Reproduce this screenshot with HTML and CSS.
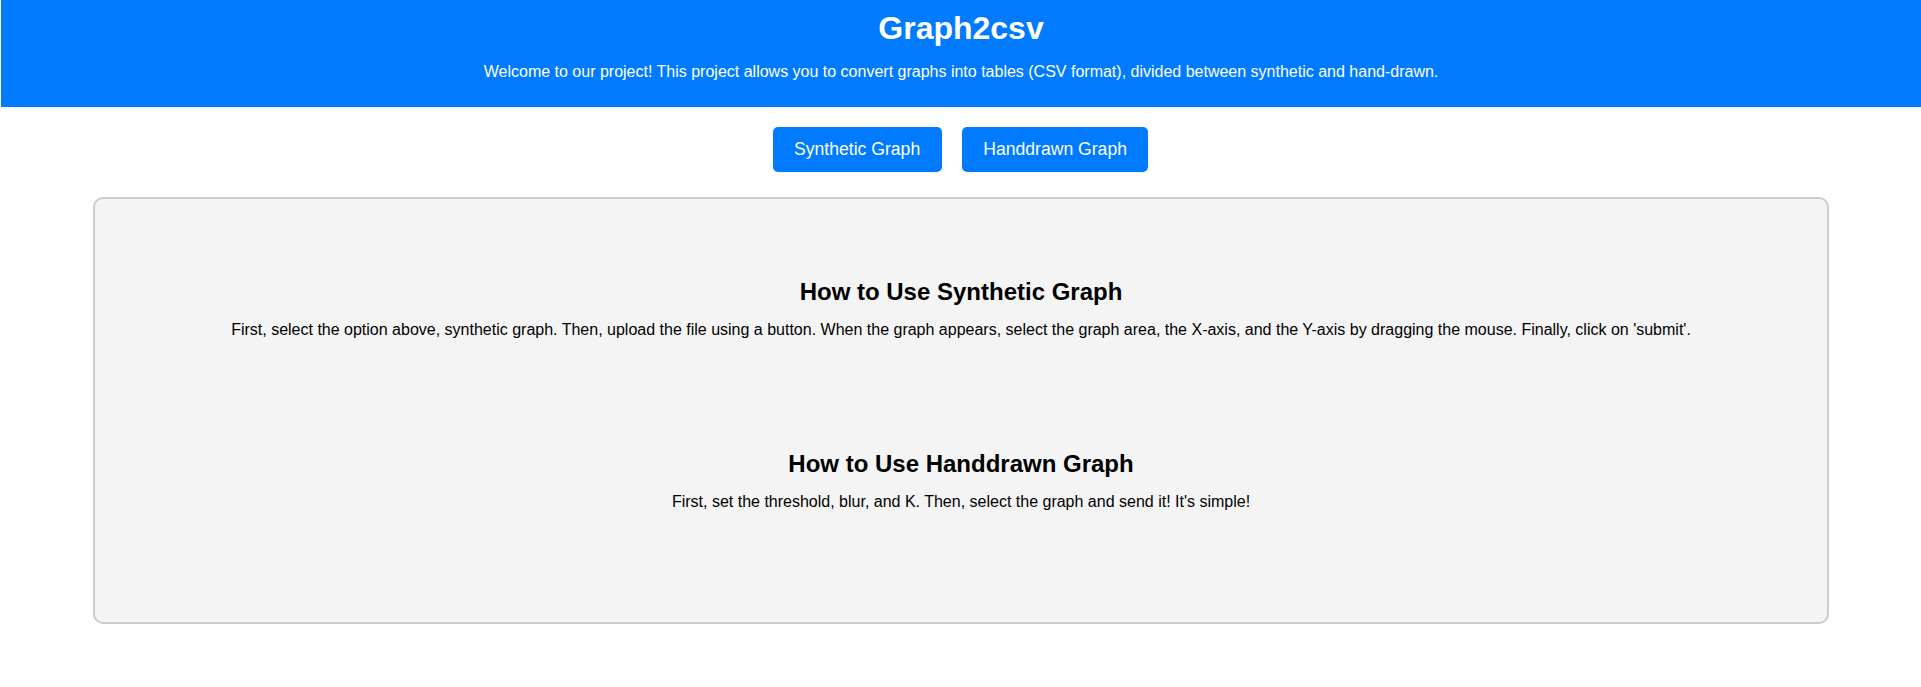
FILE: index.html
```html
<!DOCTYPE html>
<html lang="en">
<head>
<meta charset="utf-8">
<title>Graph2csv</title>
<link rel="stylesheet" href="styles.css">
</head>
<body>
<header class="site-header">
  <h1 class="title">Graph2csv</h1>
  <p class="subtitle">Welcome to our project! This project allows you to convert graphs into tables (CSV format), divided between synthetic and hand-drawn.</p>
</header>
<nav class="tabs">
  <button class="tab-btn">Synthetic Graph</button>
  <button class="tab-btn">Handdrawn Graph</button>
</nav>
<main class="panel">
  <section class="howto">
    <h2 class="howto-title">How to Use Synthetic Graph</h2>
    <p class="howto-text">First, select the option above, synthetic graph. Then, upload the file using a button. When the graph appears, select the graph area, the X-axis, and the Y-axis by dragging the mouse. Finally, click on 'submit'.</p>
  </section>
  <section class="howto">
    <h2 class="howto-title">How to Use Handdrawn Graph</h2>
    <p class="howto-text">First, set the threshold, blur, and K. Then, select the graph and send it! It's simple!</p>
  </section>
</main>
</body>
</html>
```

FILE: styles.css
```css
* { box-sizing: border-box; }

html, body {
  margin: 0;
  padding: 0;
  background: #ffffff;
  font-family: "Liberation Sans", Arial, sans-serif;
  color: #000;
}

.site-header {
  background: #007bff;
  color: #fff;
  text-align: center;
  padding: 10px 0;
  margin-left: 1px;
}

.title {
  margin: 0;
  font-size: 32px;
  font-weight: bold;
}

.subtitle {
  margin: 16px 0;
  font-size: 16px;
}

.tabs {
  display: flex;
  justify-content: center;
  gap: 20px;
  margin: 20px 0 25px;
}

.tab-btn {
  background: #007bff;
  color: #fff;
  border: none;
  border-radius: 5px;
  padding: 12px 21.5px;
  font-family: "Liberation Sans", Arial, sans-serif;
  font-size: 17.6px;
  line-height: 20.5px;
  cursor: pointer;
}

.panel {
  margin: 0 92px 0 93px;
  background: #f4f4f4;
  border: 2px solid #ccc;
  border-radius: 10px;
  padding: 79.5px 20px 111px;
  text-align: center;
}

.howto + .howto {
  margin-top: 111px;
}

.howto-title {
  margin: 0 0 15px;
  font-size: 24px;
  font-weight: bold;
}

.howto-text {
  margin: 0;
  font-size: 16px;
}
```
